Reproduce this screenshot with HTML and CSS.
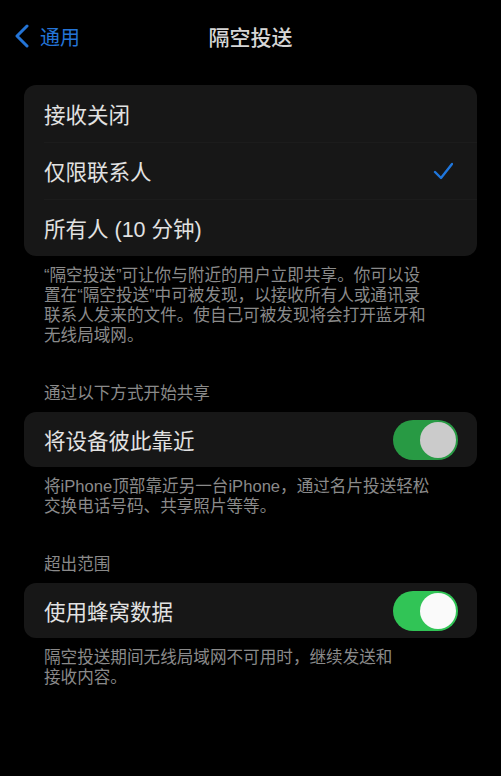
FILE: index.html
```html
<!DOCTYPE html>
<html lang="zh-CN">
<head>
  <meta charset="UTF-8">
  <meta name="viewport" content="width=device-width, initial-scale=1.0">
  <title>隔空投送</title>
  <link rel="stylesheet" href="styles.css">
</head>
<body>
  <nav class="navbar">
    <a class="back" href="#">
      <svg class="chevron" width="16" height="24" viewBox="0 0 16 24">
        <path d="M13 2 L3 12 L13 22" fill="none" stroke="currentColor" stroke-width="3" stroke-linecap="round" stroke-linejoin="round"/>
      </svg>
      <span>通用</span>
    </a>
    <h1 class="title">隔空投送</h1>
    <span></span>
  </nav>

  <section class="group">
    <ul class="card">
      <li class="row">接收关闭</li>
      <li class="row">仅限联系人
        <svg class="check" width="20" height="20" viewBox="0 0 20 20">
          <path d="M2 11 L8 17 L19 3" fill="none" stroke="currentColor" stroke-width="2.4" stroke-linecap="round" stroke-linejoin="round"/>
        </svg>
      </li>
      <li class="row">所有人 (10 分钟)</li>
    </ul>
    <p class="footer">“隔空投送”可让你与附近的用户立即共享。你可以设<br>置在“隔空投送”中可被发现，以接收所有人或通讯录<br>联系人发来的文件。使自己可被发现将会打开蓝牙和<br>无线局域网。</p>
  </section>

  <section class="group">
    <p class="header">通过以下方式开始共享</p>
    <ul class="card">
      <li class="row">将设备彼此靠近
        <span class="switch dim"><span class="knob"></span></span>
      </li>
    </ul>
    <p class="footer">将iPhone顶部靠近另一台iPhone，通过名片投送轻松<br>交换电话号码、共享照片等等。</p>
  </section>

  <section class="group">
    <p class="header">超出范围</p>
    <ul class="card">
      <li class="row">使用蜂窝数据
        <span class="switch"><span class="knob"></span></span>
      </li>
    </ul>
    <p class="footer">隔空投送期间无线局域网不可用时，继续发送和<br>接收内容。</p>
  </section>
</body>
</html>
```

FILE: styles.css
```css
body {
  margin: 0;
  background: #000;
  color: #e2e2e2;
  font-family: "Liberation Sans", "Noto Sans CJK SC", sans-serif;
}

.navbar {
  display: grid;
  grid-template-columns: 1fr auto 1fr;
  align-items: center;
  height: 72px;
  padding: 0 14px;
}

.back {
  display: flex;
  align-items: center;
  gap: 10px;
  color: #2474d6;
  text-decoration: none;
  font-size: 20px;
}

.title {
  margin: 0;
  font-size: 21px;
  font-weight: 500;
  color: #d6d6d6;
}

.group {
  margin: 0 24px;
}

.group:first-of-type {
  margin-top: 13px;
}

.card {
  list-style: none;
  margin: 0;
  padding: 0;
  background: #171717;
  border-radius: 12px;
  overflow: hidden;
}

.row {
  display: flex;
  align-items: center;
  justify-content: space-between;
  height: 57px;
  padding: 0 19px 0 20px;
  font-size: 21.5px;
  position: relative;
}

/* hairline between rows, barely there on the dark card */
.row + .row::before {
  content: "";
  position: absolute;
  top: 0;
  left: 20px;
  right: 0;
  height: 1px;
  background: #1c1c1c;
}

.group + .group .row {
  height: 55px;
}

.check {
  color: #1f76dc;
  margin-right: 5px;
}

.switch {
  display: flex;
  align-items: center;
  justify-content: flex-end;
  width: 65px;
  height: 40px;
  padding: 2px;
  box-sizing: border-box;
  border-radius: 20px;
  background: #31c456;
}

.knob {
  width: 36px;
  height: 36px;
  border-radius: 50%;
  background: #fafafa;
}

.switch.dim {
  background: #289a44;
}

.switch.dim .knob {
  background: #cbcbcb;
}

.footer,
.header {
  margin: 0;
  padding: 0 20px;
  font-size: 16.6px;
  line-height: 20px;
  color: #8a8a8a;
}

.footer {
  margin-top: 10px;
  margin-bottom: 38px;
}

.header {
  margin-bottom: 8px;
}
```
